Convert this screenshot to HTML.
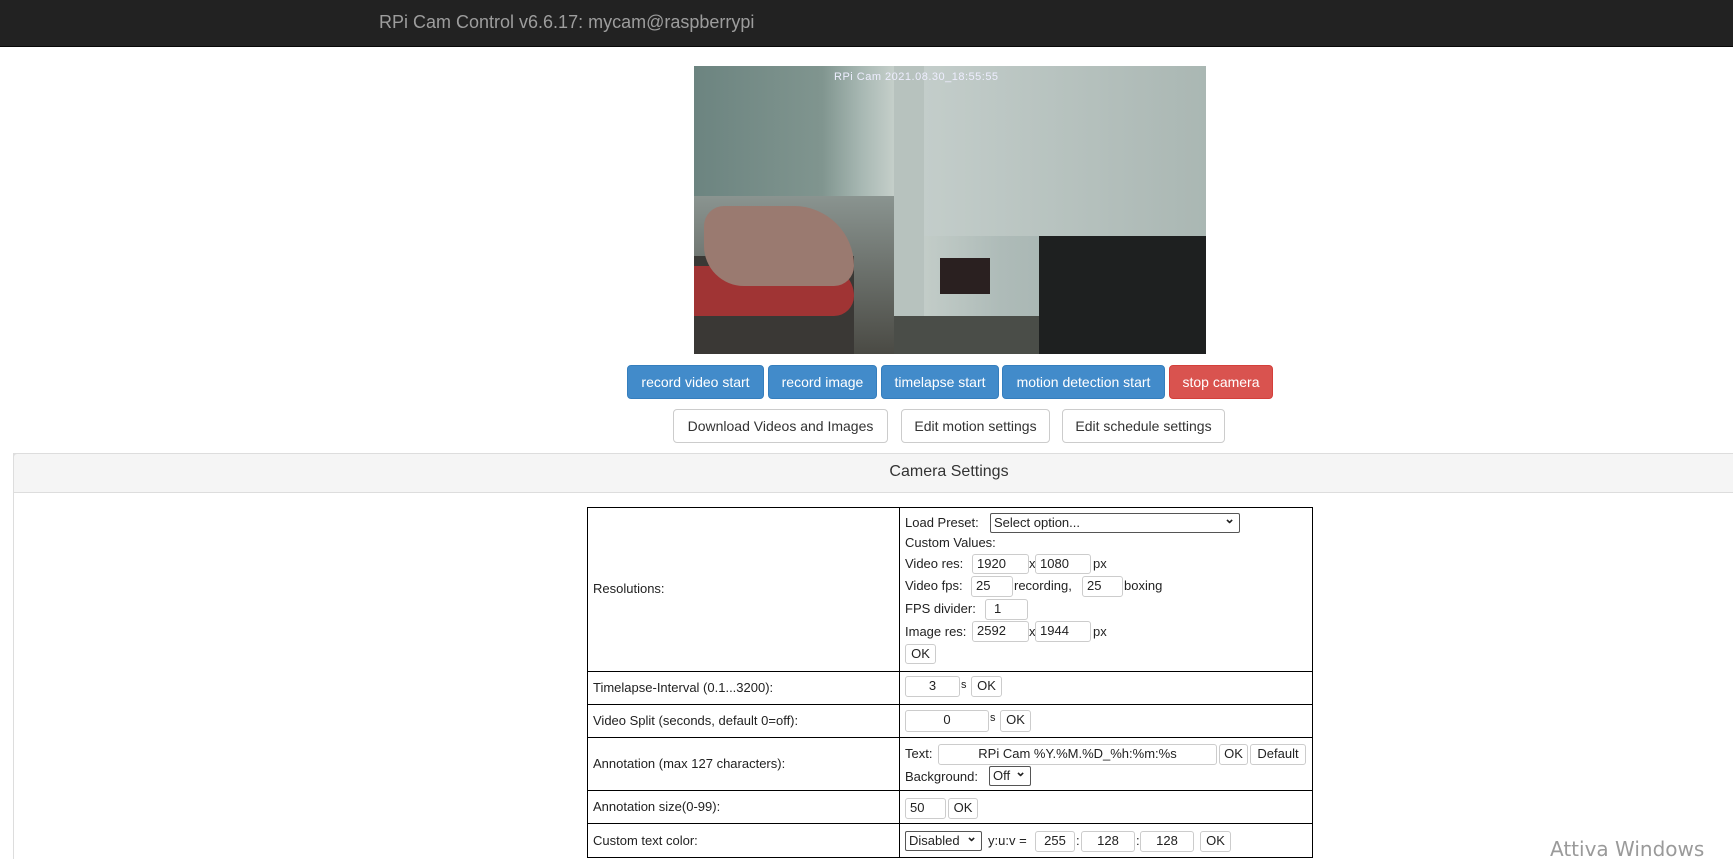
<!DOCTYPE html>
<html style="width:1733px;height:859px;overflow:hidden"><head><meta charset="utf-8"><style>
*{box-sizing:border-box;margin:0;padding:0}
body{width:1733px;height:859px;overflow:hidden;background:#fff;font-family:"Liberation Sans",Arial,sans-serif;position:relative;color:#333}
.a{position:absolute}
.hdr{left:0;top:0;width:1733px;height:47px;background:#222;border-bottom:1px solid #080808}
.ttl{left:379px;top:12px;font-size:18px;color:#9d9d9d}
.btn{position:absolute;height:34px;border-radius:4px;font-size:14px;display:flex;align-items:center;justify-content:center;color:#fff;background:#428bca;border:1px solid #357ebd}
.btn.r{background:#d9534f;border-color:#d43f3a}
.btn.w{background:#fff;color:#333;border-color:#ccc}
.panel{left:13px;top:453px;width:1760px;height:420px;border-left:1px solid #ddd;border-top:1px solid #ddd}
.ph{left:13px;top:453px;width:1760px;height:40px;background:#f5f5f5;border:1px solid #ddd;border-radius:4px 4px 0 0}
.pt{left:0;width:1898px;top:463px;text-align:center;font-size:16px;color:#333}
.tb{left:587px;top:507px;width:726px;height:351px;border:1px solid #000}
.hl{position:absolute;left:587px;width:726px;height:1px;background:#000}
.t{position:absolute;font-size:13px;color:#222;white-space:nowrap;line-height:16px}
.i{position:absolute;border:1px solid #ccc;border-radius:3px;font-size:13px;color:#222;line-height:18px;padding-left:4px;background:#fff;white-space:nowrap;overflow:hidden}
.c{text-align:center;padding:0}
.s{position:absolute;border:1px solid #555;border-radius:2px;font-size:13px;color:#222;line-height:18px;padding-left:3px;background:#fff}
.s:after{content:"⌄";position:absolute;right:4px;top:-4px;font-size:13px;font-weight:bold}
</style></head><body>
<div class="a hdr"></div>
<div class="a ttl">RPi Cam Control v6.6.17: mycam@raspberrypi</div>

<div class="a" style="left:694px;top:66px;width:512px;height:288px;overflow:hidden;background:#6f8682">
 <div class="a" style="left:0;top:0;width:512px;height:288px;background:linear-gradient(90deg,#6c8480 0%,#80958f 25%,#a9b9b4 33%,#c9d2cd 40%,#aebbb8 60%,#9aaaa6 100%)"></div>
 <div class="a" style="left:200px;top:0;width:30px;height:288px;background:#b7c2be"></div>
 <div class="a" style="left:230px;top:0;width:282px;height:170px;background:linear-gradient(90deg,#c3cdca,#aab7b3)"></div>
 <div class="a" style="left:0;top:130px;width:200px;height:158px;background:linear-gradient(180deg,#8a9490,#4a4a44)"></div>
 <div class="a" style="left:0;top:190px;width:160px;height:98px;background:#3a3835"></div>
 <div class="a" style="left:0;top:200px;width:160px;height:50px;background:#a03434;border-radius:0 30px 20px 0"></div>
 <div class="a" style="left:10px;top:140px;width:150px;height:80px;background:#9a7a70;border-radius:20px 60px 20px 40px"></div>
 <div class="a" style="left:200px;top:250px;width:312px;height:38px;background:#4a4d48"></div>
 <div class="a" style="left:345px;top:170px;width:167px;height:118px;background:#1e2020"></div>
 <div class="a" style="left:246px;top:192px;width:50px;height:36px;background:#2a2020"></div>
 <div class="a" style="left:140px;top:5px;width:512px;font-size:11px;color:#eef;letter-spacing:.5px">RPi Cam 2021.08.30_18:55:55</div>
</div>

<div class="btn" style="left:627px;top:365px;width:137px">record video start</div>
<div class="btn" style="left:768px;top:365px;width:109px">record image</div>
<div class="btn" style="left:881px;top:365px;width:118px">timelapse start</div>
<div class="btn" style="left:1002px;top:365px;width:163px">motion detection start</div>
<div class="btn r" style="left:1169px;top:365px;width:104px">stop camera</div>
<div class="btn w" style="left:673px;top:409px;width:215px">Download Videos and Images</div>
<div class="btn w" style="left:901px;top:409px;width:149px">Edit motion settings</div>
<div class="btn w" style="left:1062px;top:409px;width:163px">Edit schedule settings</div>

<div class="a panel"></div>
<div class="a ph"></div>
<div class="a pt">Camera Settings</div>

<div class="a tb"></div>
<div class="a" style="left:899px;top:507px;width:1px;height:351px;background:#000"></div>
<div class="hl" style="top:671px"></div>
<div class="hl" style="top:704px"></div>
<div class="hl" style="top:737px"></div>
<div class="hl" style="top:790px"></div>
<div class="hl" style="top:823px"></div>

<div class="t" style="left:593px;top:581px">Resolutions:</div>
<div class="t" style="left:593px;top:680px">Timelapse-Interval (0.1...3200):</div>
<div class="t" style="left:593px;top:713px">Video Split (seconds, default 0=off):</div>
<div class="t" style="left:593px;top:756px">Annotation (max 127 characters):</div>
<div class="t" style="left:593px;top:799px">Annotation size(0-99):</div>
<div class="t" style="left:593px;top:833px">Custom text color:</div>

<div class="t" style="left:905px;top:515px">Load Preset:</div>
<div class="s" style="left:990px;top:513px;width:250px;height:20px">Select option...</div>
<div class="t" style="left:905px;top:535px">Custom Values:</div>
<div class="t" style="left:905px;top:556px">Video res:</div>
<div class="i" style="left:972px;top:554px;width:57px;height:20px">1920</div>
<div class="t" style="left:1029px;top:556px">x</div>
<div class="i" style="left:1035px;top:554px;width:56px;height:20px">1080</div>
<div class="t" style="left:1093px;top:556px">px</div>
<div class="t" style="left:905px;top:578px">Video fps:</div>
<div class="i" style="left:971px;top:576px;width:42px;height:21px">25</div>
<div class="t" style="left:1014px;top:578px">recording,</div>
<div class="i" style="left:1082px;top:576px;width:41px;height:21px">25</div>
<div class="t" style="left:1124px;top:578px">boxing</div>
<div class="t" style="left:905px;top:601px">FPS divider:</div>
<div class="i" style="left:985px;top:599px;width:43px;height:21px;padding-left:8px">1</div>
<div class="t" style="left:905px;top:624px">Image res:</div>
<div class="i" style="left:972px;top:621px;width:57px;height:21px">2592</div>
<div class="t" style="left:1029px;top:624px">x</div>
<div class="i" style="left:1035px;top:621px;width:56px;height:21px">1944</div>
<div class="t" style="left:1093px;top:624px">px</div>
<div class="i c" style="left:905px;top:644px;width:31px;height:20px">OK</div>

<div class="i c" style="left:905px;top:676px;width:55px;height:21px">3</div>
<div class="t" style="left:961px;top:677px;font-size:11px">s</div>
<div class="i c" style="left:971px;top:676px;width:31px;height:21px">OK</div>

<div class="i c" style="left:905px;top:710px;width:84px;height:22px">0</div>
<div class="t" style="left:990px;top:710px;font-size:11px">s</div>
<div class="i c" style="left:1000px;top:710px;width:31px;height:22px">OK</div>

<div class="t" style="left:905px;top:746px">Text:</div>
<div class="i c" style="left:938px;top:744px;width:279px;height:21px">RPi Cam %Y.%M.%D_%h:%m:%s</div>
<div class="i c" style="left:1219px;top:744px;width:29px;height:21px">OK</div>
<div class="i c" style="left:1250px;top:744px;width:56px;height:21px">Default</div>
<div class="t" style="left:905px;top:769px">Background:</div>
<div class="s" style="left:989px;top:766px;width:42px;height:20px">Off</div>

<div class="i" style="left:905px;top:798px;width:41px;height:21px">50</div>
<div class="i c" style="left:948px;top:798px;width:30px;height:21px">OK</div>

<div class="s" style="left:905px;top:831px;width:77px;height:20px">Disabled</div>
<div class="t" style="left:988px;top:833px">y:u:v =</div>
<div class="i c" style="left:1035px;top:831px;width:40px;height:21px">255</div>
<div class="t" style="left:1076px;top:833px">:</div>
<div class="i c" style="left:1081px;top:831px;width:54px;height:21px">128</div>
<div class="t" style="left:1136px;top:833px">:</div>
<div class="i c" style="left:1140px;top:831px;width:54px;height:21px">128</div>
<div class="i c" style="left:1200px;top:831px;width:31px;height:21px">OK</div>

<div class="a" style="left:1550px;top:837px;font-size:20px;color:#9a9a9a;font-family:'DejaVu Sans','Liberation Sans',sans-serif">Attiva Windows</div>
</body></html>
